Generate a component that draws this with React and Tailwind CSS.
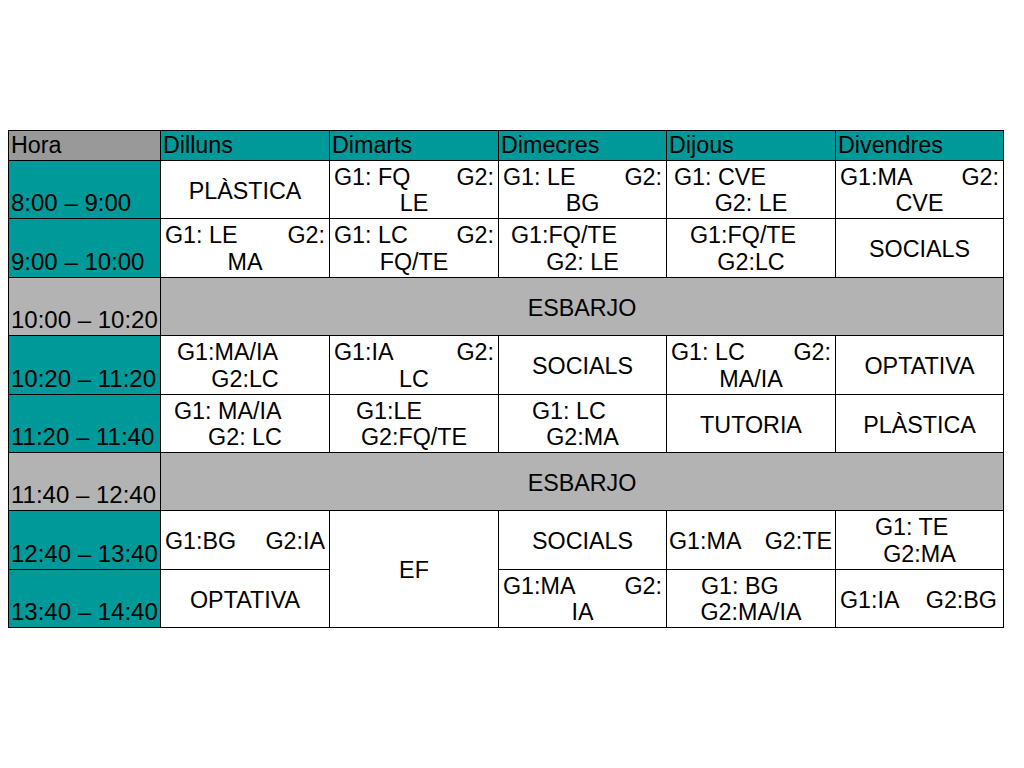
import React from "react";

const base = "border-r border-b border-black bg-white";

function Hora({ children, gray }) {
  return (
    <div
      className={`${gray ? "bg-[#b3b3b3]" : "bg-[#009999]"} border-r border-b border-black flex items-end pl-[2px] pb-[2px] whitespace-nowrap text-[24px]`}
    >
      {children}
    </div>
  );
}

function C({ children, className = "" }) {
  return (
    <div className={`${base} flex items-center justify-center pt-[3px] whitespace-nowrap ${className}`}>
      {children}
    </div>
  );
}

function J({ a, b, c, px = "px-[4px]" }) {
  return (
    <div className={`${base} flex flex-col justify-center pt-[1px] whitespace-nowrap`}>
      <div className={`flex justify-between ${px}`}>
        <span>{a}</span>
        <span>{b}</span>
      </div>
      <div className="text-center">{c}</div>
    </div>
  );
}

function L({ a, c, pl }) {
  return (
    <div className={`${base} flex flex-col justify-center pt-[1px] whitespace-nowrap`}>
      <div className={pl}>{a}</div>
      <div className="text-center">{c}</div>
    </div>
  );
}

function S({ a, b, px }) {
  return (
    <div className={`${base} flex items-center justify-between pt-[3px] whitespace-nowrap ${px}`}>
      <span>{a}</span>
      <span>{b}</span>
    </div>
  );
}

function Head({ children, gray }) {
  return (
    <div
      className={`${gray ? "bg-[#999999]" : "bg-[#009999]"} border-r border-b border-black flex items-end pl-[2px] pb-[2px] whitespace-nowrap`}
    >
      {children}
    </div>
  );
}

export default function App() {
  return (
    <div className="w-[1024px] h-[768px] bg-white overflow-hidden pt-[130px] pl-[8px] font-['Liberation_Sans',Arial,sans-serif] text-black text-[23.3px] leading-[26.5px]">
      <div className="grid w-fit grid-cols-[152px_169px_169px_168px_169px_168px] grid-rows-[30px_58px_59px_58px_59px_58px_58px_59px_58px] border-l border-t border-black">
        {/* header */}
        <Head gray>Hora</Head>
        <Head>Dilluns</Head>
        <Head>Dimarts</Head>
        <Head>Dimecres</Head>
        <Head>Dijous</Head>
        <Head>Divendres</Head>

        {/* row 1 */}
        <Hora>8:00 – 9:00</Hora>
        <C>PLÀSTICA</C>
        <J a="G1: FQ" b="G2:" c="LE" />
        <J a="G1: LE" b="G2:" c="BG" />
        <L a="G1: CVE" c="G2: LE" pl="pl-[7px]" />
        <J a="G1:MA" b="G2:" c="CVE" />

        {/* row 2 */}
        <Hora>9:00 – 10:00</Hora>
        <J a="G1: LE" b="G2:" c="MA" />
        <J a="G1: LC" b="G2:" c="FQ/TE" />
        <L a="G1:FQ/TE" c="G2: LE" pl="pl-[12px]" />
        <L a="G1:FQ/TE" c="G2:LC" pl="pl-[23px]" />
        <C>SOCIALS</C>

        {/* row 3 */}
        <Hora gray>10:00 – 10:20</Hora>
        <div className="col-span-5 bg-[#b3b3b3] border-r border-b border-black flex items-center justify-center pt-[3px]">
          ESBARJO
        </div>

        {/* row 4 */}
        <Hora>10:20 – 11:20</Hora>
        <L a="G1:MA/IA" c="G2:LC" pl="pl-[16px]" />
        <J a="G1:IA" b="G2:" c="LC" />
        <C>SOCIALS</C>
        <J a="G1: LC" b="G2:" c="MA/IA" />
        <C>OPTATIVA</C>

        {/* row 5 */}
        <Hora>11:20 – 11:40</Hora>
        <L a="G1: MA/IA" c="G2: LC" pl="pl-[13px]" />
        <L a="G1:LE" c="G2:FQ/TE" pl="pl-[26px]" />
        <L a="G1: LC" c="G2:MA" pl="pl-[33px]" />
        <C>TUTORIA</C>
        <C>PLÀSTICA</C>

        {/* row 6 */}
        <Hora gray>11:40 – 12:40</Hora>
        <div className="col-span-5 bg-[#b3b3b3] border-r border-b border-black flex items-center justify-center pt-[3px]">
          ESBARJO
        </div>

        {/* row 7 */}
        <Hora>12:40 – 13:40</Hora>
        <S a="G1:BG" b="G2:IA" px="pl-[4px] pr-[4px]" />
        <C className="row-span-2">EF</C>
        <C>SOCIALS</C>
        <S a="G1:MA" b="G2:TE" px="pl-[2px] pr-[3px]" />
        <L a="G1: TE" c="G2:MA" pl="pl-[39px]" />

        {/* row 8 */}
        <Hora>13:40 – 14:40</Hora>
        <C>OPTATIVA</C>
        <J a="G1:MA" b="G2:" c="IA" />
        <L a="G1: BG" c="G2:MA/IA" pl="pl-[34px]" />
        <S a="G1:IA" b="G2:BG" px="pl-[4px] pr-[6px]" />
      </div>
    </div>
  );
}
